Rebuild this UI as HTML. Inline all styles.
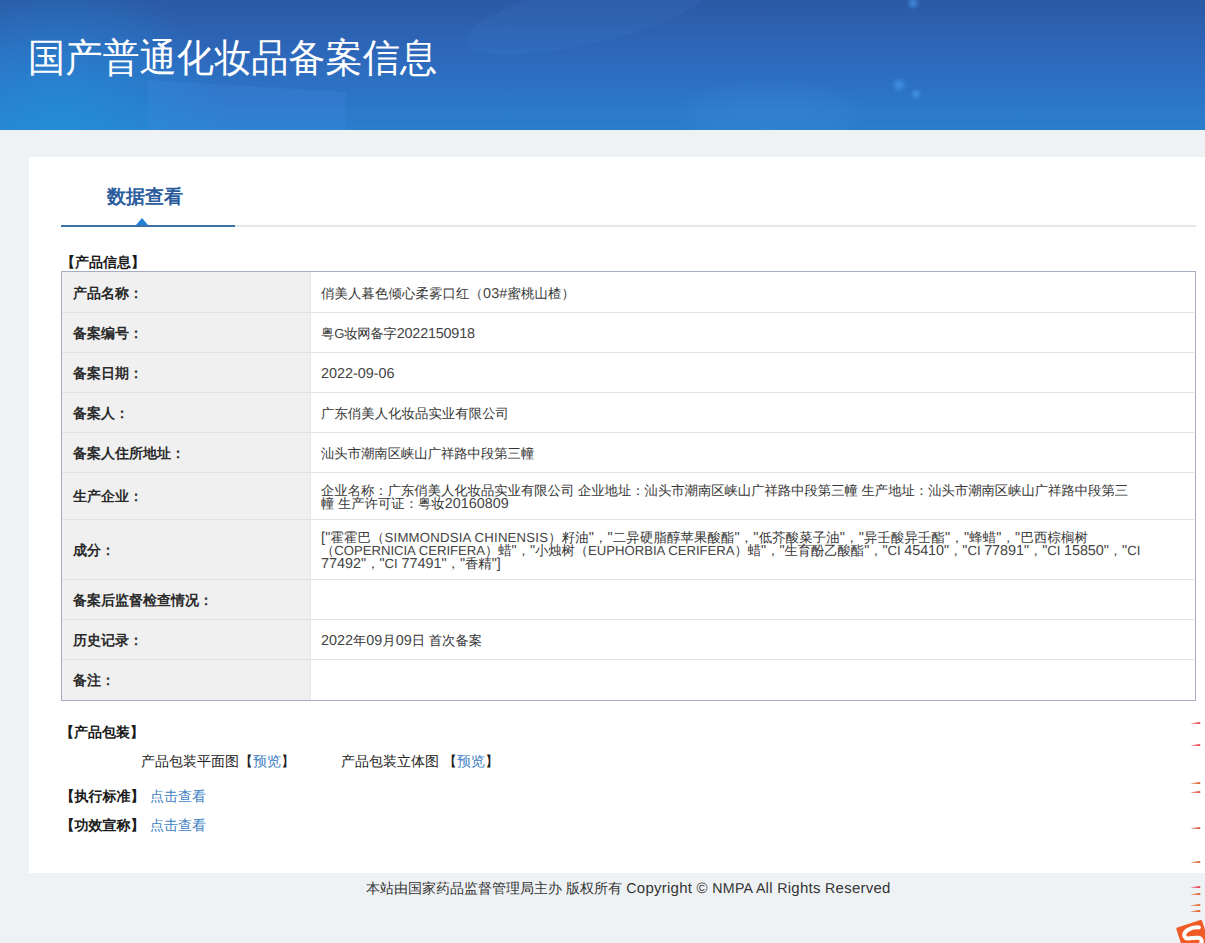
<!DOCTYPE html>
<html><head><meta charset="utf-8">
<style>
*{margin:0;padding:0;box-sizing:border-box}
html,body{width:1205px;height:943px;overflow:hidden;text-rendering:geometricPrecision;background:#eff2f5;font-family:"Liberation Sans",sans-serif;color:#333}
.hdr{position:absolute;left:0;top:0;width:1205px;height:130px;overflow:hidden;background:linear-gradient(180deg,#2c5aa6 0%,#2e6cc0 50%,#2a80cf 100%)}
.hdr svg{position:absolute;left:0;top:0}
.hdr h1{position:absolute;left:28px;top:35.5px;font-size:37.2px;font-weight:500;color:#fff;white-space:nowrap;line-height:44px;letter-spacing:0px;transform:scaleY(1.045);transform-origin:0 38px}
.card{position:absolute;left:29px;top:157px;width:1176px;height:716px;background:#fff}
.tab{position:absolute;left:107px;top:185px;font-size:19px;font-weight:bold;color:#2b5d9c;line-height:26px;white-space:nowrap}
.tline{position:absolute;left:61px;top:225px;width:1135px;height:2px;background:#e6e6e6}
.tline2{position:absolute;left:61px;top:225px;width:174px;height:2px;background:#3a72a6}
.tri{position:absolute;left:136px;top:218px;width:0;height:0;border-left:6.5px solid transparent;border-right:6.5px solid transparent;border-bottom:7px solid #2282d8}
.tbl{position:absolute;left:61px;top:271px;width:1135px;height:430px;border:1px solid #a4adc2;background:#fff}
.lcol{position:absolute;left:62px;top:272px;width:248px;height:428px;background:#f0f0f0}
.vline{position:absolute;left:310px;top:272px;width:1px;height:428px;background:#e8e8e8}
.sep{position:absolute;left:62px;width:1132px;height:1px;background:#e2e2e2}
.t{position:absolute;white-space:nowrap;line-height:16px;font-size:13.33px}
.t .l{font-size:14.4px}
.t .u{font-size:13.2px}
.lab{font-weight:bold;color:#2a2a2a;font-size:14px}
.val{color:#363636}
.val .l,.val .u{color:#444}
.sec{font-weight:bold;color:#1a1a1a;font-size:14px}
.nrm{color:#222;font-size:14px}
.lnk{color:#3d80c4}
.ft{position:absolute;left:366px;top:879px;font-size:14px;color:#333;line-height:18px;white-space:nowrap;letter-spacing:0px}
.ft .l{font-size:15px;letter-spacing:0.25px}
.ft .u{font-size:14.2px;letter-spacing:0.25px}
</style></head><body>
<div class="hdr"><svg width="1205" height="130" viewBox="0 0 1205 130">
<defs>
<linearGradient id="g0" x1="0" y1="0" x2="0" y2="1">
<stop offset="0" stop-color="#2b59a5"/><stop offset="0.45" stop-color="#2e69bc"/><stop offset="1" stop-color="#2a7fcd"/>
</linearGradient>
<radialGradient id="gl" cx="60" cy="140" r="170" gradientUnits="userSpaceOnUse">
<stop offset="0" stop-color="#2392dc" stop-opacity="0.75"/><stop offset="1" stop-color="#2392dc" stop-opacity="0"/>
</radialGradient>
<radialGradient id="ge" cx="0.5" cy="0.5" r="0.5">
<stop offset="0" stop-color="#5aa8f0" stop-opacity="0.14"/><stop offset="0.8" stop-color="#5aa8f0" stop-opacity="0.07"/><stop offset="1" stop-color="#5aa8f0" stop-opacity="0"/>
</radialGradient>
<radialGradient id="gd" cx="0.5" cy="0.5" r="0.5">
<stop offset="0" stop-color="#4a9ef0" stop-opacity="0.7"/><stop offset="1" stop-color="#4a9ef0" stop-opacity="0"/>
</radialGradient>
</defs>
<rect width="1205" height="130" fill="url(#g0)"/>
<rect width="1205" height="130" fill="url(#gl)"/>
<polygon points="148,80 346,92 346,130 148,130" fill="#5090f0" opacity="0.18"/>
<ellipse cx="588" cy="14" rx="126" ry="30" transform="rotate(-13 588 14)" fill="#6ab0ff" opacity="0.07"/>
<ellipse cx="770" cy="112" rx="95" ry="32" fill="url(#ge)"/>
<circle cx="899" cy="85" r="8" fill="url(#gd)"/>
<circle cx="916" cy="94" r="6" fill="url(#gd)"/>
<circle cx="913" cy="3" r="7" fill="url(#gd)"/>
</svg><h1>国产普通化妆品备案信息</h1></div>
<div class="card"></div>
<div class="tab">数据查看</div>
<div class="tline"></div><div class="tline2"></div><div class="tri"></div>
<div class="tbl"></div><div class="lcol"></div><div class="vline"></div>
<div class="sep" style="top:312px"></div><div class="sep" style="top:352px"></div><div class="sep" style="top:392px"></div><div class="sep" style="top:432px"></div><div class="sep" style="top:472px"></div><div class="sep" style="top:519px"></div><div class="sep" style="top:579px"></div><div class="sep" style="top:619px"></div><div class="sep" style="top:659px"></div>
<div id="L1" class="t lab" style="left:73px;top:285px">产品名称：</div>
<div id="L2" class="t lab" style="left:73px;top:325px">备案编号：</div>
<div id="L3" class="t lab" style="left:73px;top:365px">备案日期：</div>
<div id="L4" class="t lab" style="left:73px;top:405px">备案人：</div>
<div id="L5" class="t lab" style="left:73px;top:445px">备案人住所地址：</div>
<div id="L6" class="t lab" style="left:73px;top:488px">生产企业：</div>
<div id="L7" class="t lab" style="left:73px;top:542px">成分：</div>
<div id="L8" class="t lab" style="left:73px;top:592px">备案后监督检查情况：</div>
<div id="L9" class="t lab" style="left:73px;top:632px">历史记录：</div>
<div id="L10" class="t lab" style="left:73px;top:672px">备注：</div>
<div id="V1" class="t val" style="left:321px;top:286px;letter-spacing:0.17px">俏美人暮色倾心柔雾口红（<span class="l">03#</span>蜜桃山楂）</div>
<div id="V2" class="t val" style="left:321px;top:326px;letter-spacing:-0.2px">粤<span class="u">G</span>妆网备字<span class="l">2022150918</span></div>
<div id="V3" class="t val" style="left:321px;top:366px"><span class="l">2022-09-06</span></div>
<div id="V4" class="t val" style="left:321px;top:406px;letter-spacing:0.1px">广东俏美人化妆品实业有限公司</div>
<div id="V5" class="t val" style="left:321px;top:446px">汕头市潮南区峡山广祥路中段第三幢</div>
<div id="V6a" class="t val" style="left:321px;top:483px">企业名称：广东俏美人化妆品实业有限公司 企业地址：汕头市潮南区峡山广祥路中段第三幢 生产地址：汕头市潮南区峡山广祥路中段第三</div>
<div id="V6b" class="t val" style="left:321px;top:496px">幢 生产许可证：粤妆<span class="l">20160809</span></div>
<div id="V7a" class="t val" style="left:321px;top:530px;letter-spacing:0.19px"><span class="l">["</span>霍霍巴（<span class="u">SIMMONDSIA CHINENSIS</span>）籽油<span class="l">"</span>，<span class="l">"</span>二异硬脂醇苹果酸酯<span class="l">"</span>，<span class="l">"</span>低芥酸菜子油<span class="l">"</span>，<span class="l">"</span>异壬酸异壬酯<span class="l">"</span>，<span class="l">"</span>蜂蜡<span class="l">"</span>，<span class="l">"</span>巴西棕榈树</div>
<div id="V7b" class="t val" style="left:321px;top:543px;letter-spacing:-0.05px">（<span class="u">COPERNICIA CERIFERA</span>）蜡<span class="l">"</span>，<span class="l">"</span>小烛树（<span class="u">EUPHORBIA CERIFERA</span>）蜡<span class="l">"</span>，<span class="l">"</span>生育酚乙酸酯<span class="l">"</span>，<span class="l">"</span><span class="u">CI </span><span class="l">45410"</span>，<span class="l">"</span><span class="u">CI </span><span class="l">77891"</span>，<span class="l">"</span><span class="u">CI </span><span class="l">15850"</span>，<span class="l">"</span><span class="u">CI</span></div>
<div id="V7c" class="t val" style="left:321px;top:556px"><span class="l">77492"</span>，<span class="l">"</span><span class="u">CI </span><span class="l">77491"</span>，<span class="l">"</span>香精<span class="l">"]</span></div>
<div id="V9" class="t val" style="left:321px;top:633px"><span class="l">2022</span>年<span class="l">09</span>月<span class="l">09</span>日 首次备案</div>
<div id="S1" class="t sec" style="left:61px;top:254px">【产品信息】</div>
<div id="S2" class="t sec" style="left:60px;top:724px">【产品包装】</div>
<div id="S3" class="t nrm" style="left:141px;top:753px">产品包装平面图【<span class="lnk">预览</span>】</div>
<div id="S4" class="t nrm" style="left:341px;top:753px">产品包装立体图 【<span class="lnk">预览</span>】</div>
<div id="S5" class="t sec" style="left:60.5px;top:788px">【执行标准】</div>
<div id="S5b" class="t nrm" style="left:150px;top:788px"><span class="lnk">点击查看</span></div>
<div id="S6" class="t sec" style="left:60.5px;top:817px">【功效宣称】</div>
<div id="S6b" class="t nrm" style="left:150px;top:817px"><span class="lnk">点击查看</span></div>
<svg style="position:absolute;left:0;top:0" width="1205" height="943"><path d="M1190 723.6 L1199.5 721.9 Q1201.5 723 1199.5 724.1 Z" fill="#e8505e"/><path d="M1190 745.6 L1199.5 743.9 Q1201.5 745 1199.5 746.1 Z" fill="#e8505e"/><path d="M1190 783.6 L1199.5 781.9 Q1201.5 783 1199.5 784.1 Z" fill="#e26a3a"/><path d="M1190 792.6 L1199.5 790.9 Q1201.5 792 1199.5 793.1 Z" fill="#e05a48"/><path d="M1190 828.6 L1199.5 826.9 Q1201.5 828 1199.5 829.1 Z" fill="#d9604a"/><path d="M1190 862.6 L1199.5 860.9 Q1201.5 862 1199.5 863.1 Z" fill="#d96a3c"/><path d="M1190 887.6 L1199.5 885.9 Q1201.5 887 1199.5 888.1 Z" fill="#e84a60"/><path d="M1190 894.6 L1199.5 892.9 Q1201.5 894 1199.5 895.1 Z" fill="#d9643a"/><path d="M1190 905.6 L1199.5 903.9 Q1201.5 905 1199.5 906.1 Z" fill="#e46a30"/><path d="M1190 911.6 L1199.5 909.9 Q1201.5 911 1199.5 912.1 Z" fill="#e2602e"/><g transform="translate(1176 928) rotate(-18)"><rect x="0" y="0" width="27" height="27" rx="1.5" fill="#f05a24"/>
<path d="M22 6.5 C15 3.5 5 5 5.5 11 C6 16 20 13.5 20.5 19 C21 24.5 10 25.5 4 22" stroke="#fff" stroke-width="4" fill="none" stroke-linecap="round"/></g></svg>
<div class="ft">本站由国家药品监督管理局主办 版权所有<span class="l"> </span><span class="u">C</span><span class="l">opyright © </span><span class="u">NMPA A</span><span class="l">ll </span><span class="u">R</span><span class="l">ights </span><span class="u">R</span><span class="l">eserved</span></div>
</body></html>
